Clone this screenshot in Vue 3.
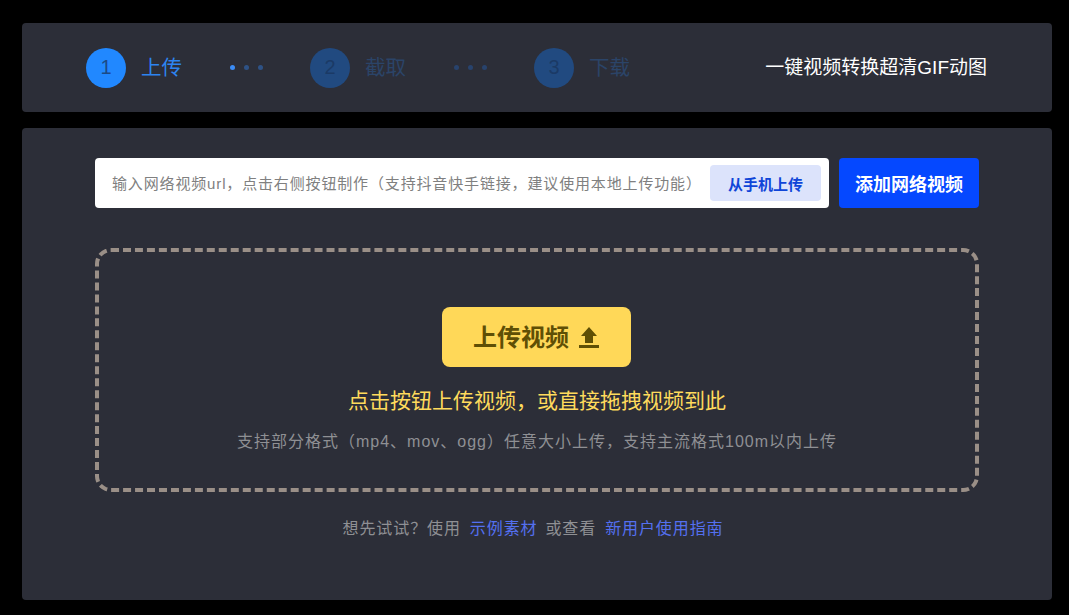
<script setup>
const steps = [
  { n: 1, label: '上传', active: true },
  { n: 2, label: '截取' },
  { n: 3, label: '下载' },
]
</script>

<template>
  <div class="page">
    <header class="panel top">
      <div class="steps">
        <template v-for="(s, i) in steps" :key="s.n">
          <div class="step" :class="{ active: s.active }">
            <span class="num">{{ s.n }}</span>
            <span class="label">{{ s.label }}</span>
          </div>
          <div v-if="i < 2" class="dots" :class="{ first: i === 0 }"><i></i><i></i><i></i></div>
        </template>
      </div>
      <div class="slogan">一键视频转换超清GIF动图</div>
    </header>
    <main class="panel body">
      <div class="url-row">
        <div class="url-box">
          <span class="hint">输入网络视频url，点击右侧按钮制作（支持抖音快手链接，建议使用本地上传功能）</span>
          <button class="phone">从手机上传</button>
        </div>
        <button class="add">添加网络视频</button>
      </div>
      <div class="drop">
        <button class="upload">
          <span class="upload-text">上传视频</span>
          <svg width="20" height="21" viewBox="0 0 20 21"><path d="M10 0 18 9H14V16H6V9H2Z M0 18H20V21H0Z" fill="#5f4f05"/></svg>
        </button>
        <p class="main-tip">点击按钮上传视频，或直接拖拽视频到此</p>
        <p class="sub-tip">支持部分格式（mp4、mov、ogg）任意大小上传，支持主流格式100m以内上传</p>
      </div>
      <p class="foot">想先试试？使用<a>示例素材</a>或查看<a>新用户使用指南</a></p>
    </main>
  </div>
</template>

<style>
html, body { margin: 0; background: #000; }
</style>

<style scoped>
.page {
  width: 1069px; height: 615px; box-sizing: border-box; padding: 23px 17px 15px 22px;
  display: flex; flex-direction: column; gap: 16px; background: #000; overflow: hidden;
  font-family: "Liberation Sans", "Noto Sans CJK SC", sans-serif;
}
.panel { background: #2c2e38; border-radius: 4px; }
.top {
  height: 89px; flex: none; display: flex; align-items: center; justify-content: space-between;
  padding: 0 65px 0 64px; box-sizing: border-box;
}
.steps { display: flex; align-items: center; }
.step { display: flex; align-items: center; gap: 15px; }
.num {
  width: 40px; height: 40px; border-radius: 50%; background: #214a80; color: #1b3a66;
  font-size: 20px; display: flex; align-items: center; justify-content: center;
}
.step.active .num { background: #2188ff; color: #1c4a86; }
.label { color: #2b4468; font-size: 20.5px; line-height: 28px; }
.step.active .label { color: #2d84f0; }
.dots { display: flex; gap: 9px; width: 42px; margin: 0 38px 0 48px; box-sizing: border-box; }
.dots i { width: 5px; height: 5px; border-radius: 50%; background: #2f5fa0; opacity: .75; }
.dots.first i:first-child { background: #3b8cf5; opacity: 1; }
.dots:not(.first) i { background: #28436d; opacity: 1; }
.slogan { color: #fff; font-size: 19px; line-height: 28px; }
.body { flex: 1; padding: 30px 73px 0; box-sizing: border-box; }
.url-row { display: flex; gap: 10px; width: 884px; }
.url-box {
  width: 734px; height: 50px; background: #fff; border-radius: 4px; box-sizing: border-box;
  display: flex; align-items: center; justify-content: space-between; padding: 0 8px 0 17px;
}
.hint { color: #808080; font-size: 15px; letter-spacing: .85px; white-space: nowrap; padding-bottom: 2px; }
button { border: 0; font-family: inherit; padding: 0; }
.phone {
  width: 111px; height: 36px; background: #dce3fb; color: #0f45d8; font-size: 15px;
  font-weight: 700; border-radius: 4px;
}
.add {
  width: 140px; height: 50px; background: #0548ff; color: #fff; font-size: 18px;
  font-weight: 700; border-radius: 4px;
}
.drop {
  width: 884px; height: 244px; margin-top: 40px; box-sizing: border-box;
  border: 4px dashed #9a8f87; border-radius: 16px;
  display: flex; flex-direction: column; align-items: center; padding-top: 55px;
}
.upload {
  width: 189px; height: 60px; margin-right: 2px; background: #ffd858; color: #5f4f05; border-radius: 8px;
  font-size: 24px; font-weight: 700; display: flex; align-items: center; justify-content: center; gap: 10px;
}
.upload-text { padding-bottom: 4px; }
.main-tip { margin: 20px 0 0; color: #ffdb5c; font-size: 21px; line-height: 28px; }
.sub-tip { margin: 16px 0 0; color: #8f9094; font-size: 16px; letter-spacing: 1px; line-height: 22px; }
.foot { margin: 26px 0 0; text-align: center; color: #8f9094; font-size: 16px; letter-spacing: .9px; line-height: 22px; }
.foot a { color: #5470f0; margin: 0 8px 0 9px; }
</style>
